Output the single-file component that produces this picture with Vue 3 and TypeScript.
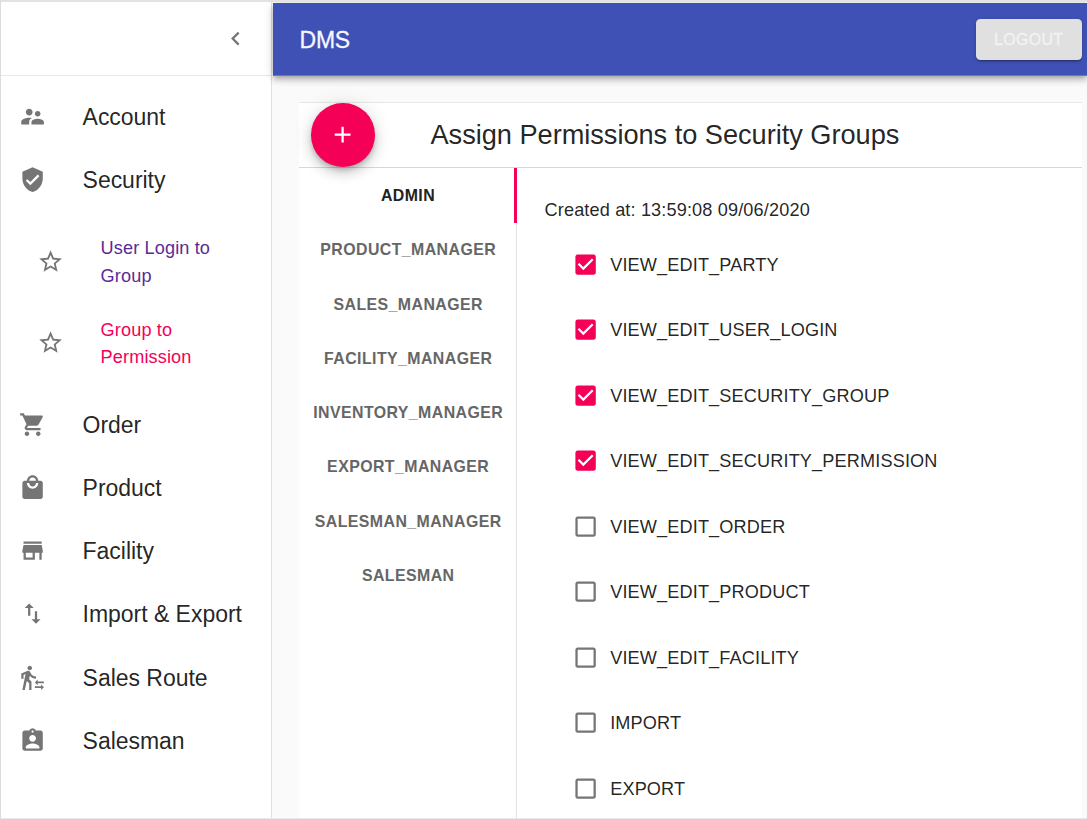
<script setup lang="ts">
import { ref } from 'vue'

interface NavItem {
  label: string
  paths: string[]
  children?: { label: string; tone: string }[]
}

const nav: NavItem[] = [
  {
    label: 'Account',
    paths: ['M16.5 12c1.38 0 2.49-1.12 2.49-2.5S17.88 7 16.5 7C15.12 7 14 8.12 14 9.5s1.12 2.5 2.5 2.5zM9 11c1.66 0 2.99-1.34 2.99-3S10.66 5 9 5C7.34 5 6 6.34 6 8s1.34 3 3 3zm7.5 3c-1.83 0-5.5.92-5.5 2.75V19h11v-2.25c0-1.83-3.67-2.75-5.5-2.75zM9 13c-2.33 0-7 1.17-7 3.5V19h7v-2.25c0-.85.33-2.34 2.37-3.47C10.5 13.1 9.66 13 9 13z'],
  },
  {
    label: 'Security',
    paths: ['M12 1L3 5v6c0 5.55 3.84 10.74 9 12 5.16-1.26 9-6.45 9-12V5l-9-4zm-2 16l-4-4 1.41-1.41L10 14.17l6.59-6.59L18 9l-8 8z'],
    children: [
      { label: 'User Login to Group', tone: 'visited' },
      { label: 'Group to Permission', tone: 'current' },
    ],
  },
  {
    label: 'Order',
    paths: ['M7 18c-1.1 0-1.99.9-1.99 2S5.9 22 7 22s2-.9 2-2-.9-2-2-2zM1 2v2h2l3.6 7.59-1.35 2.45c-.16.28-.25.61-.25.96 0 1.1.9 2 2 2h12v-2H7.42c-.14 0-.25-.11-.25-.25l.03-.12.9-1.63h7.45c.75 0 1.41-.41 1.75-1.03l3.58-6.49c.08-.14.12-.31.12-.48 0-.55-.45-1-1-1H5.21l-.94-2H1zm16 16c-1.1 0-1.99.9-1.99 2s.89 2 1.99 2 2-.9 2-2-.9-2-2-2z'],
  },
  {
    label: 'Product',
    paths: ['M19 6h-2c0-2.76-2.24-5-5-5S7 3.24 7 6H5c-1.1 0-1.99.9-1.99 2L3 20c0 1.1.9 2 2 2h14c1.1 0 2-.9 2-2V8c0-1.1-.9-2-2-2zm-7-3c1.66 0 3 1.34 3 3H9c0-1.66 1.34-3 3-3zm0 10c-2.76 0-5-2.24-5-5h2c0 1.66 1.34 3 3 3s3-1.34 3-3h2c0 2.76-2.24 5-5 5z'],
  },
  {
    label: 'Facility',
    paths: ['M20 4H4v2h16V4zm1 10v-2l-1-5H4l-1 5v2h1v6h10v-6h4v6h2v-6h1zm-9 4H6v-4h6v4z'],
  },
  {
    label: 'Import & Export',
    paths: ['M16 17.01V10h-2v7.01h-3L15 21l4-3.99h-3zM9 3L5 6.99h3V14h2V6.99h3L9 3z'],
  },
  {
    label: 'Sales Route',
    paths: ['M16.49 15.5v-1.75L14 16.25l2.49 2.5V17H22v-1.5zM19.51 19.75H14v1.5h5.51V23L22 20.5 19.51 18zM9.5 5.5c1.1 0 2-.9 2-2s-.9-2-2-2-2 .9-2 2 .9 2 2 2zM5.75 8.9L3 23h2.1l1.75-8L9 17v6h2v-7.55L8.95 13.4l.6-3C10.85 12 12.8 13 15 13v-2c-1.85 0-3.45-1-4.35-2.45l-.95-1.6C9.35 6.35 8.7 6 8 6c-.25 0-.5.05-.75.15L2 8.3V13h2V9.65l1.75-.75'],
  },
  {
    label: 'Salesman',
    paths: ['M19 3h-4.18C14.4 1.84 13.3 1 12 1c-1.3 0-2.4.84-2.82 2H5c-1.1 0-2 .9-2 2v14c0 1.1.9 2 2 2h14c1.1 0 2-.9 2-2V5c0-1.1-.9-2-2-2zm-7 0c.55 0 1 .45 1 1s-.45 1-1 1-1-.45-1-1 .45-1 1-1zm0 4c1.66 0 3 1.34 3 3s-1.34 3-3 3-3-1.34-3-3 1.34-3 3-3zm6 12H6v-1.4c0-2 4-3.1 6-3.1s6 1.1 6 3.1V19z'],
  },
]

const groups = [
  'ADMIN',
  'PRODUCT_MANAGER',
  'SALES_MANAGER',
  'FACILITY_MANAGER',
  'INVENTORY_MANAGER',
  'EXPORT_MANAGER',
  'SALESMAN_MANAGER',
  'SALESMAN',
]
const activeGroup = ref('ADMIN')

const permissions = ref([
  { name: 'VIEW_EDIT_PARTY', granted: true },
  { name: 'VIEW_EDIT_USER_LOGIN', granted: true },
  { name: 'VIEW_EDIT_SECURITY_GROUP', granted: true },
  { name: 'VIEW_EDIT_SECURITY_PERMISSION', granted: true },
  { name: 'VIEW_EDIT_ORDER', granted: false },
  { name: 'VIEW_EDIT_PRODUCT', granted: false },
  { name: 'VIEW_EDIT_FACILITY', granted: false },
  { name: 'IMPORT', granted: false },
  { name: 'EXPORT', granted: false },
])
</script>

<template>
  <div class="page">
    <aside class="drawer">
      <div class="drawer-head">
        <svg class="icon" viewBox="0 0 24 24"><path d="M15.41 7.41L14 6l-6 6 6 6 1.41-1.41L10.83 12z" /></svg>
      </div>
      <nav class="nav">
        <template v-for="item in nav" :key="item.label">
          <a class="nav-item">
            <svg class="icon" viewBox="0 0 24 24"><path v-for="d in item.paths" :key="d" :d="d" /></svg>
            <span>{{ item.label }}</span>
          </a>
          <div v-if="item.children" class="sub-list">
            <a v-for="child in item.children" :key="child.label" class="sub-item">
              <svg class="icon" viewBox="0 0 24 24"><path d="M22 9.24l-7.19-.62L12 2 9.19 8.63 2 9.24l5.46 4.73L5.82 21 12 17.27 18.18 21l-1.63-7.03L22 9.24zM12 15.4l-3.76 2.27 1-4.28-3.32-2.88 4.38-.38L12 6.1l1.71 4.04 4.38.38-3.32 2.88 1 4.28L12 15.4z" /></svg>
              <span :class="child.tone">{{ child.label }}</span>
            </a>
          </div>
        </template>
      </nav>
    </aside>

    <div class="main">
      <header class="app-bar">
        <span class="brand">DMS</span>
        <button class="logout">LOGOUT</button>
      </header>
      <section class="card">
        <div class="card-head">
          <button class="fab">
            <svg class="icon" viewBox="0 0 24 24"><path d="M19 13h-6v6h-2v-6H5v-2h6V5h2v6h6v2z" /></svg>
          </button>
          <h1 class="title">Assign Permissions to Security Groups</h1>
        </div>
        <div class="card-body">
          <div class="tabs">
            <button
              v-for="g in groups"
              :key="g"
              class="tab"
              :class="{ active: g === activeGroup }"
              @click="activeGroup = g"
            >{{ g }}</button>
          </div>
          <div class="panel">
            <p class="created">Created at: 13:59:08 09/06/2020</p>
            <div v-for="p in permissions" :key="p.name" class="perm" @click="p.granted = !p.granted">
              <svg class="icon" :class="{ checked: p.granted }" viewBox="0 0 24 24">
                <path v-if="p.granted" d="M19 3H5c-1.11 0-2 .9-2 2v14c0 1.1.89 2 2 2h14c1.11 0 2-.9 2-2V5c0-1.1-.89-2-2-2zm-9 14l-5-5 1.41-1.41L10 14.17l7.59-7.59L19 8l-9 9z" />
                <path v-else d="M19 5v14H5V5h14m0-2H5c-1.1 0-2 .9-2 2v14c0 1.1.9 2 2 2h14c1.1 0 2-.9 2-2V5c0-1.1-.9-2-2-2z" />
              </svg>
              <span>{{ p.name }}</span>
            </div>
          </div>
        </div>
      </section>
    </div>
  </div>
</template>

<style>
body {
  margin: 0;
  overflow: hidden;
}
</style>

<style scoped>
.page {
  box-sizing: border-box;
  width: 1087px;
  height: 819px;
  display: flex;
  overflow: hidden;
  background: #fafafa;
  border-top: 2px solid #e2e2e2;
  border-left: 1px solid #dcdcdc;
  border-bottom: 1px solid #e8e8e8;
  font-family: 'Liberation Sans', Arial, sans-serif;
  color: rgba(0, 0, 0, 0.87);
}
button {
  font-family: inherit;
  border: 0;
  padding: 0;
  margin: 0;
  cursor: pointer;
}
.icon {
  width: 27.2px;
  height: 27.2px;
  flex: none;
  fill: #757575;
}
.drawer {
  box-sizing: border-box;
  width: 271px;
  flex: none;
  background: #fff;
  border-right: 1px solid #e0e0e0;
}
.drawer-head {
  box-sizing: border-box;
  height: 74px;
  display: flex;
  align-items: center;
  justify-content: flex-end;
  padding-right: 22px;
  border-bottom: 1px solid #e8e8e8;
}
.nav {
  padding-top: 9.3px;
}
.nav-item {
  height: 63.2px;
  display: flex;
  align-items: center;
  padding-left: 18px;
  gap: 36.4px;
  font-size: 23px;
  letter-spacing: -0.03px;
  white-space: nowrap;
}
.nav-item span {
  padding-top: 1.7px;
}
.sub-list {
  padding: 9.1px 0;
}
.sub-item {
  height: 81.5px;
  display: flex;
  align-items: center;
  padding-left: 36px;
  gap: 36.4px;
  font-size: 18.14px;
  line-height: 27.3px;
  letter-spacing: 0.13px;
}
.sub-item span {
  width: 125px;
  padding-top: 2px;
}
.visited {
  color: #5c2a96;
}
.current {
  color: #f50057;
}
.main {
  flex: 1;
  min-width: 0;
  display: flex;
  flex-direction: column;
  padding-left: 1px;
}
.app-bar {
  box-sizing: border-box;
  height: 73px;
  margin-top: 1px;
  flex: none;
  display: flex;
  align-items: center;
  justify-content: space-between;
  padding: 1px 5.5px 0 26.5px;
  border-bottom: 1px solid #6a76c0;
  background: #3f51b5;
  box-shadow: 0 2px 4.5px -1px rgba(0, 0, 0, 0.2), 0 4.5px 5.7px rgba(0, 0, 0, 0.14), 0 1px 11px rgba(0, 0, 0, 0.12);
}
.brand {
  padding-top: 2px;
  color: #f6f7fc;
  font-size: 23px;
  letter-spacing: -0.2px;
  -webkit-text-stroke: 0.3px #f6f7fc;
}
.logout {
  width: 105.5px;
  height: 41px;
  border-radius: 4.5px;
  background: #e0e0e0;
  color: #f3f3f3;
  font-size: 15.88px;
  letter-spacing: 0.38px;
  -webkit-text-stroke: 0.3px #f3f3f3;
  box-shadow: 0 3px 1px -2px rgba(0, 0, 0, 0.2), 0 2px 2px rgba(0, 0, 0, 0.14), 0 1px 5px rgba(0, 0, 0, 0.12);
}
.card {
  margin: 26px 5.5px 0 26px;
  flex: 1;
  min-height: 0;
  display: flex;
  flex-direction: column;
  background: #fff;
}
.card-head {
  box-sizing: border-box;
  height: 66px;
  flex: none;
  display: flex;
  align-items: center;
  padding-left: 12px;
  gap: 56px;
  border-top: 1px solid #e8e8e8;
  border-bottom: 1px solid #d8d8d8;
}
.fab {
  width: 63.5px;
  height: 63.5px;
  border-radius: 50%;
  display: flex;
  align-items: center;
  justify-content: center;
  background: #f50057;
  box-shadow: 0 3.4px 5.7px -1px rgba(0, 0, 0, 0.2), 0 6.8px 11.3px rgba(0, 0, 0, 0.14), 0 1px 20px rgba(0, 0, 0, 0.12);
}
.fab .icon {
  fill: #fff;
}
.title {
  margin: 0;
  font-size: 27.2px;
  font-weight: 400;
  letter-spacing: -0.03px;
  white-space: nowrap;
}
.card-body {
  flex: 1;
  min-height: 0;
  display: flex;
}
.tabs {
  box-sizing: border-box;
  width: 218px;
  flex: none;
  display: flex;
  flex-direction: column;
  border-right: 1px solid #e2e2e2;
}
.tab {
  height: 54.3px;
  flex: none;
  padding: 1px 0 0 1.4px;
  background: none;
  font-size: 15.88px;
  font-weight: 700;
  letter-spacing: 0.43px;
  color: #666;
}
.tab.active {
  height: 54.6px;
  padding: 2px 0 0 3px;
  color: #222;
  margin-right: -1px;
  border-right: 3px solid #f50057;
}
.panel {
  flex: 1;
  padding: 29px 0 0 27.5px;
  font-size: 18.14px;
  letter-spacing: 0.14px;
}
.created {
  margin: 0;
  line-height: 27.2px;
  height: 34.8px;
}
.perm {
  height: 65.5px;
  display: flex;
  align-items: center;
  padding-left: 27.7px;
  gap: 10.8px;
  line-height: 27.2px;
}
.perm span {
  padding-top: 2px;
}
.perm .checked {
  fill: #f50057;
}
</style>
